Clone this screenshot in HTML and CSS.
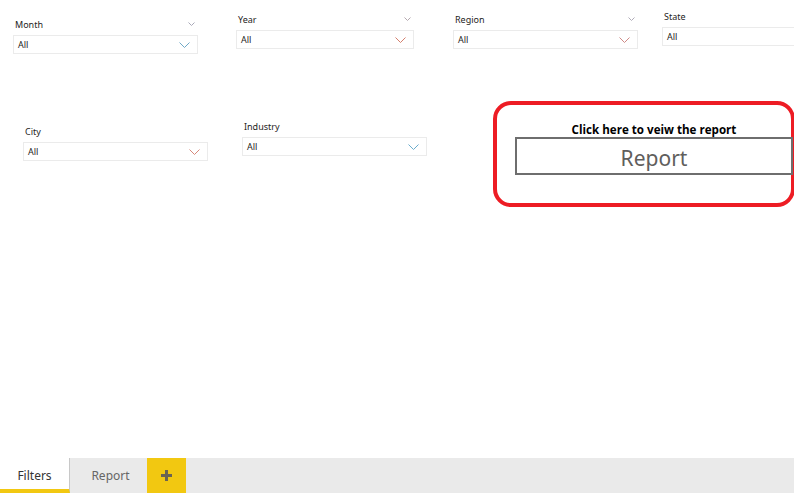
FILE: index.html
```html
<!DOCTYPE html>
<html>
<head>
<meta charset="utf-8">
<link rel="stylesheet" href="styles.css">
</head>
<body>
<div class="page">
  <div class="canvas">
    <div class="slicer s-month">
      <div class="slicer-head"><span class="slicer-label">Month</span><svg class="mini-chev" width="7" height="4" viewBox="0 0 7 4"><path d="M0.5 0.5 L3.5 3.5 L6.5 0.5" fill="none" stroke="#a9a9b8" stroke-width="1"/></svg></div>
      <div class="slicer-box"><span>All</span><svg class="chev" width="11" height="6" viewBox="0 0 11 6"><path d="M0.5 0.5 L5.5 5.5 L10.5 0.5" fill="none" stroke="#6fa9c6" stroke-width="1"/></svg></div>
    </div>
    <div class="slicer s-year">
      <div class="slicer-head"><span class="slicer-label">Year</span><svg class="mini-chev" width="7" height="4" viewBox="0 0 7 4"><path d="M0.5 0.5 L3.5 3.5 L6.5 0.5" fill="none" stroke="#b5a9b0" stroke-width="1"/></svg></div>
      <div class="slicer-box"><span>All</span><svg class="chev" width="11" height="6" viewBox="0 0 11 6"><path d="M0.5 0.5 L5.5 5.5 L10.5 0.5" fill="none" stroke="#d47e6c" stroke-width="1"/></svg></div>
    </div>
    <div class="slicer s-region">
      <div class="slicer-head"><span class="slicer-label">Region</span><svg class="mini-chev" width="7" height="4" viewBox="0 0 7 4"><path d="M0.5 0.5 L3.5 3.5 L6.5 0.5" fill="none" stroke="#b0acb8" stroke-width="1"/></svg></div>
      <div class="slicer-box"><span>All</span><svg class="chev" width="11" height="6" viewBox="0 0 11 6"><path d="M0.5 0.5 L5.5 5.5 L10.5 0.5" fill="none" stroke="#cf8a86" stroke-width="1"/></svg></div>
    </div>
    <div class="slicer s-state">
      <div class="slicer-head"><span class="slicer-label">State</span></div>
      <div class="slicer-box"><span>All</span></div>
    </div>
    <div class="slicer s-city">
      <div class="slicer-head"><span class="slicer-label">City</span></div>
      <div class="slicer-box"><span>All</span><svg class="chev" width="11" height="6" viewBox="0 0 11 6"><path d="M0.5 0.5 L5.5 5.5 L10.5 0.5" fill="none" stroke="#d7887a" stroke-width="1"/></svg></div>
    </div>
    <div class="slicer s-industry">
      <div class="slicer-head"><span class="slicer-label">Industry</span></div>
      <div class="slicer-box"><span>All</span><svg class="chev" width="11" height="6" viewBox="0 0 11 6"><path d="M0.5 0.5 L5.5 5.5 L10.5 0.5" fill="none" stroke="#6aaccc" stroke-width="1"/></svg></div>
    </div>

    <div class="highlight"></div>
    <div class="report-group">
      <div class="report-title">Click here to veiw the report</div>
      <div class="report-button">Report</div>
    </div>
  </div>
  <div class="tabbar">
    <div class="tab tab-active">Filters</div>
    <div class="tab">Report</div>
    <div class="tab-add"><svg width="11" height="11" viewBox="0 0 11 11"><rect x="4" y="0" width="3" height="11" fill="#6b6354"/><rect x="0" y="4" width="11" height="3" fill="#6b6354"/></svg></div>
  </div>
</div>
</body>
</html>
```
FILE: styles.css
```css
html, body {
  margin: 0;
  padding: 0;
  background: #ffffff;
  overflow: hidden;
}
.page {
  width: 794px;
  height: 493px;
  display: flex;
  flex-direction: column;
  font-family: "Noto Sans", "Open Sans", sans-serif;
}
.canvas {
  position: relative;
  height: 458px;
  overflow: hidden;
}
.slicer {
  position: absolute;
  display: flex;
  flex-direction: column;
  gap: 4px;
}
.s-month { left: 13px; top: 17px; width: 185px; }
.s-year { left: 236px; top: 12px; width: 178px; }
.s-region { left: 453px; top: 12px; width: 185px; }
.s-state { left: 662px; top: 9px; width: 150px; }
.s-city { left: 23px; top: 124px; width: 185px; }
.s-industry { left: 242px; top: 119px; width: 185px; }

.slicer-head {
  display: flex;
  align-items: center;
  justify-content: space-between;
  height: 14px;
  padding: 0 2px 0 2px;
}
.slicer-label {
  font-size: 9px;
  color: #252423;
}
.mini-chev { margin-right: 1px; }
.slicer-box {
  height: 17px;
  border: 1px solid #ebebeb;
  display: flex;
  align-items: center;
  justify-content: space-between;
  padding: 0 7px 0 4px;
  font-size: 9px;
  color: #252423;
}
.highlight {
  position: absolute;
  left: 493px;
  top: 101px;
  width: 294px;
  height: 98px;
  border: 4px solid #ed1c24;
  border-radius: 18px;
}
.report-group {
  position: absolute;
  left: 515px;
  top: 122px;
  width: 278px;
  display: flex;
  flex-direction: column;
  align-items: center;
}
.report-title {
  font-family: "Open Sans", "Noto Sans", sans-serif;
  font-weight: 700;
  font-size: 11.6px;
  color: #000;
  height: 15px;
  line-height: 16px;
}
.report-button {
  box-sizing: border-box;
  width: 100%;
  height: 38px;
  border: 2px solid #6e6e6e;
  display: flex;
  align-items: center;
  justify-content: center;
  padding-top: 4px;
  font-size: 21px;
  color: #605e5c;
}
.tabbar {
  height: 35px;
  background: #eaeaea;
  display: flex;
}
.tab {
  box-sizing: border-box;
  width: 77px;
  display: flex;
  align-items: center;
  justify-content: center;
  font-size: 12px;
  color: #666666;
  padding-left: 4px;
}
.tab-active {
  width: 70px;
  background: #ffffff;
  color: #333333;
  border-right: 1px solid #c8c8c8;
  border-bottom: 4px solid #f2c811;
  padding-top: 4px;
  padding-left: 0;
}
.tab-add {
  width: 39px;
  background: #f2c811;
  display: flex;
  align-items: center;
  justify-content: center;
}
```
